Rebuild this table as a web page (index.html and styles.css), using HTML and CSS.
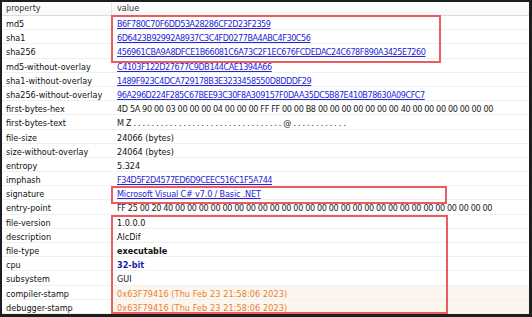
FILE: index.html
```html
<!DOCTYPE html>
<html>
<head>
<meta charset="utf-8">
<link rel="stylesheet" href="styles.css">
</head>
<body>
<div class="frame">
  <div class="table">
    <div class="row head"><div class="k">property</div><div class="v">value</div></div>
    <div class="row"><div class="k">md5</div><div class="v"><a class="hash">B6F780C70F6DD53A28286CF2D23F2359</a></div></div>
    <div class="row"><div class="k">sha1</div><div class="v"><a class="hash">6D6423B92992A8937C3C4FD0277BA4ABC4F30C56</a></div></div>
    <div class="row"><div class="k">sha256</div><div class="v"><a class="hash">456961CBA9A8DFCE1B66081C6A73C2F1EC676FCDEDAC24C678F890A3425E7260</a></div></div>
    <div class="row"><div class="k">md5-without-overlay</div><div class="v"><a class="hash">C4103F122D27677C9DB144CAE1394A66</a></div></div>
    <div class="row"><div class="k">sha1-without-overlay</div><div class="v"><a class="hash">1489F923C4DCA729178B3E3233458550D8DDDF29</a></div></div>
    <div class="row"><div class="k">sha256-without-overlay</div><div class="v"><a class="hash">96A296D224F285C67BEE93C30F8A309157F0DAA35DC5B87E410B78630A09CFC7</a></div></div>
    <div class="row"><div class="k">first-bytes-hex</div><div class="v hex">4D 5A 90 00 03 00 00 00 04 00 00 00 FF FF 00 00 B8 00 00 00 00 00 00 00 40 00 00 00 00 00 00 00</div></div>
    <div class="row"><div class="k">first-bytes-text</div><div class="v dots">M Z . . . . . . . . . . . . . . . . . . . . . . . . . . . . . . . . . @ . . . . . . . . . . . .</div></div>
    <div class="row"><div class="k">file-size</div><div class="v">24066 (bytes)</div></div>
    <div class="row"><div class="k">size-without-overlay</div><div class="v">24064 (bytes)</div></div>
    <div class="row"><div class="k">entropy</div><div class="v">5.324</div></div>
    <div class="row"><div class="k">imphash</div><div class="v"><a class="hash">F34D5F2D4577ED6D9CEEC516C1F5A744</a></div></div>
    <div class="row"><div class="k">signature</div><div class="v"><a class="link">Microsoft Visual C# v7.0 / Basic .NET</a></div></div>
    <div class="row"><div class="k">entry-point</div><div class="v hex">FF 25 00 20 40 00 00 00 00 00 00 00 00 00 00 00 00 00 00 00 00 00 00 00 00 00 00 00 00 00 00 00</div></div>
    <div class="row"><div class="k">file-version</div><div class="v">1.0.0.0</div></div>
    <div class="row"><div class="k">description</div><div class="v">AlcDif</div></div>
    <div class="row"><div class="k">file-type</div><div class="v bold">executable</div></div>
    <div class="row"><div class="k">cpu</div><div class="v bold navy">32-bit</div></div>
    <div class="row"><div class="k">subsystem</div><div class="v">GUI</div></div>
    <div class="row"><div class="k">compiler-stamp</div><div class="v stamp">0x63F79416 (Thu Feb 23 21:58:06 2023)</div></div>
    <div class="row"><div class="k">debugger-stamp</div><div class="v stamp">0x63F79416 (Thu Feb 23 21:58:06 2023)</div></div>
    <div class="mark m1"></div>
    <div class="mark m2"></div>
    <div class="mark m3"></div>
  </div>
</div>
</body>
</html>
```
FILE: styles.css
```css
html, body {
  margin: 0;
  padding: 0;
  background: #ffffff;
}
.frame {
  width: 532px;
  height: 317px;
  box-sizing: border-box;
  border-style: solid;
  border-color: #1e1e1e;
  border-width: 2px 3px 3px 2px;
  overflow: hidden;
  background: #ffffff;
}
.table {
  position: relative;
  font-family: "DejaVu Sans Condensed", "DejaVu Sans", sans-serif;
  font-stretch: condensed;
  font-size: 9px;
  color: #111111;
}
.row {
  display: grid;
  grid-template-columns: 110px 1fr;
  height: 14.2px;
  box-sizing: border-box;
  border-bottom: 1px solid #f0f0f0;
  line-height: 13px;
  white-space: nowrap;
}
.row .k,
.row .v {
  padding-top: 2px;
}
.row.head {
  height: 14px;
  color: #333333;
  border-bottom: 1px solid #dcdcdc;
  background: linear-gradient(#ffffff, #f7f7f7);
}
.row.head .k,
.row.head .v {
  padding-top: 0;
}
.row.head .k {
  border-right: 1px solid #e4e4e4;
}
.k {
  padding-left: 4px;
  overflow: hidden;
}
.v {
  padding-left: 5px;
  overflow: hidden;
}
.hash {
  color: #2424d8;
  text-decoration: underline;
  letter-spacing: -0.45px;
}
.link {
  color: #2424d8;
  text-decoration: underline;
  letter-spacing: -0.15px;
}
.hex {
  letter-spacing: -0.35px;
  color: #1a1a1a;
}
.dots {
  letter-spacing: -0.3px;
  color: #1a1a1a;
}
.bold {
  font-weight: bold;
}
.navy {
  color: #1c1ca8;
}
.stamp {
  color: #e6802f;
  background: #fdf6ee;
  letter-spacing: 0.1px;
}
.mark {
  position: absolute;
  box-sizing: border-box;
  border: 2px solid #ea5b62;
}
.m1 {
  left: 109px;
  top: 13px;
  width: 330px;
  height: 48px;
}
.m2 {
  left: 109px;
  top: 184px;
  width: 336px;
  height: 18px;
}
.m3 {
  left: 109px;
  top: 213px;
  width: 337px;
  height: 99px;
}
```
